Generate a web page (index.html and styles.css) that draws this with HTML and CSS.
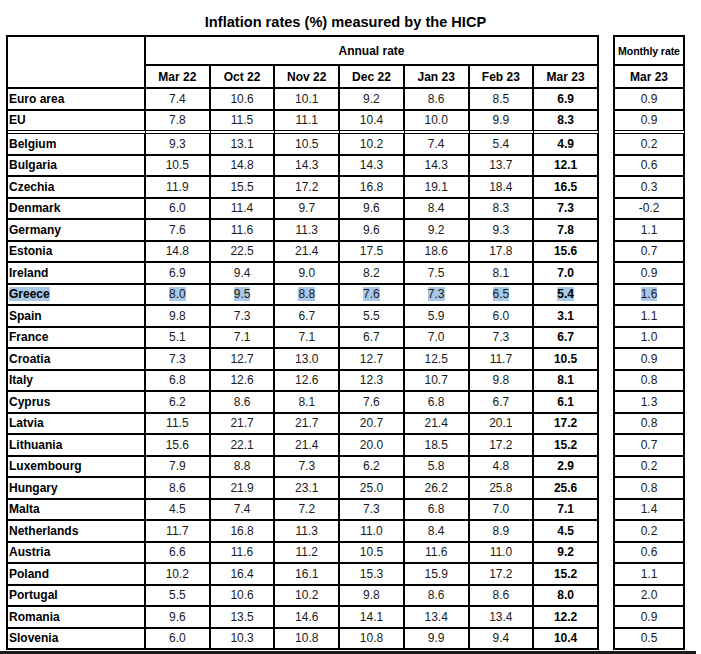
FILE: index.html
```html
<!DOCTYPE html>
<html lang="en">
<head>
<meta charset="utf-8">
<title>Inflation rates (%) measured by the HICP</title>
<link rel="stylesheet" href="styles.css">
</head>
<body>
<div class="page">
  <h1 class="title">Inflation rates (%) measured by the HICP</h1>
  <div class="tables">
    <table class="grid main">
      <colgroup><col class="c-country"><col><col><col><col><col><col><col></colgroup>
      <thead>
        <tr class="h1"><th rowspan="2" class="corner"></th><th colspan="7" class="group">Annual rate</th></tr>
        <tr class="h2"><th>Mar 22</th><th>Oct 22</th><th>Nov 22</th><th>Dec 22</th><th>Jan 23</th><th>Feb 23</th><th>Mar 23</th></tr>
      </thead>
      <tbody>
        <tr><th>Euro area</th><td>7.4</td><td>10.6</td><td>10.1</td><td>9.2</td><td>8.6</td><td>8.5</td><td class="b">6.9</td></tr>
        <tr class="sep"><th>EU</th><td>7.8</td><td>11.5</td><td>11.1</td><td>10.4</td><td>10.0</td><td>9.9</td><td class="b">8.3</td></tr>
        <tr><th>Belgium</th><td>9.3</td><td>13.1</td><td>10.5</td><td>10.2</td><td>7.4</td><td>5.4</td><td class="b">4.9</td></tr>
        <tr><th>Bulgaria</th><td>10.5</td><td>14.8</td><td>14.3</td><td>14.3</td><td>14.3</td><td>13.7</td><td class="b">12.1</td></tr>
        <tr><th>Czechia</th><td>11.9</td><td>15.5</td><td>17.2</td><td>16.8</td><td>19.1</td><td>18.4</td><td class="b">16.5</td></tr>
        <tr><th>Denmark</th><td>6.0</td><td>11.4</td><td>9.7</td><td>9.6</td><td>8.4</td><td>8.3</td><td class="b">7.3</td></tr>
        <tr><th>Germany</th><td>7.6</td><td>11.6</td><td>11.3</td><td>9.6</td><td>9.2</td><td>9.3</td><td class="b">7.8</td></tr>
        <tr><th>Estonia</th><td>14.8</td><td>22.5</td><td>21.4</td><td>17.5</td><td>18.6</td><td>17.8</td><td class="b">15.6</td></tr>
        <tr><th>Ireland</th><td>6.9</td><td>9.4</td><td>9.0</td><td>8.2</td><td>7.5</td><td>8.1</td><td class="b">7.0</td></tr>
        <tr class="sel"><th><span class="hl">Greece</span></th><td><span class="hl">8.0</span></td><td><span class="hl">9.5</span></td><td><span class="hl">8.8</span></td><td><span class="hl">7.6</span></td><td><span class="hl">7.3</span></td><td><span class="hl">6.5</span></td><td class="b"><span class="hl">5.4</span></td></tr>
        <tr><th>Spain</th><td>9.8</td><td>7.3</td><td>6.7</td><td>5.5</td><td>5.9</td><td>6.0</td><td class="b">3.1</td></tr>
        <tr><th>France</th><td>5.1</td><td>7.1</td><td>7.1</td><td>6.7</td><td>7.0</td><td>7.3</td><td class="b">6.7</td></tr>
        <tr><th>Croatia</th><td>7.3</td><td>12.7</td><td>13.0</td><td>12.7</td><td>12.5</td><td>11.7</td><td class="b">10.5</td></tr>
        <tr><th>Italy</th><td>6.8</td><td>12.6</td><td>12.6</td><td>12.3</td><td>10.7</td><td>9.8</td><td class="b">8.1</td></tr>
        <tr><th>Cyprus</th><td>6.2</td><td>8.6</td><td>8.1</td><td>7.6</td><td>6.8</td><td>6.7</td><td class="b">6.1</td></tr>
        <tr><th>Latvia</th><td>11.5</td><td>21.7</td><td>21.7</td><td>20.7</td><td>21.4</td><td>20.1</td><td class="b">17.2</td></tr>
        <tr><th>Lithuania</th><td>15.6</td><td>22.1</td><td>21.4</td><td>20.0</td><td>18.5</td><td>17.2</td><td class="b">15.2</td></tr>
        <tr><th>Luxembourg</th><td>7.9</td><td>8.8</td><td>7.3</td><td>6.2</td><td>5.8</td><td>4.8</td><td class="b">2.9</td></tr>
        <tr><th>Hungary</th><td>8.6</td><td>21.9</td><td>23.1</td><td>25.0</td><td>26.2</td><td>25.8</td><td class="b">25.6</td></tr>
        <tr><th>Malta</th><td>4.5</td><td>7.4</td><td>7.2</td><td>7.3</td><td>6.8</td><td>7.0</td><td class="b">7.1</td></tr>
        <tr><th>Netherlands</th><td>11.7</td><td>16.8</td><td>11.3</td><td>11.0</td><td>8.4</td><td>8.9</td><td class="b">4.5</td></tr>
        <tr><th>Austria</th><td>6.6</td><td>11.6</td><td>11.2</td><td>10.5</td><td>11.6</td><td>11.0</td><td class="b">9.2</td></tr>
        <tr><th>Poland</th><td>10.2</td><td>16.4</td><td>16.1</td><td>15.3</td><td>15.9</td><td>17.2</td><td class="b">15.2</td></tr>
        <tr><th>Portugal</th><td>5.5</td><td>10.6</td><td>10.2</td><td>9.8</td><td>8.6</td><td>8.6</td><td class="b">8.0</td></tr>
        <tr><th>Romania</th><td>9.6</td><td>13.5</td><td>14.6</td><td>14.1</td><td>13.4</td><td>13.4</td><td class="b">12.2</td></tr>
        <tr><th>Slovenia</th><td>6.0</td><td>10.3</td><td>10.8</td><td>10.8</td><td>9.9</td><td>9.4</td><td class="b">10.4</td></tr>
      </tbody>
    </table>

    <table class="grid monthly">
      <thead>
        <tr class="h1"><th class="group small">Monthly rate</th></tr>
        <tr class="h2"><th>Mar 23</th></tr>
      </thead>
      <tbody>
        <tr><td>0.9</td></tr>
        <tr class="sep"><td>0.9</td></tr>
        <tr><td>0.2</td></tr>
        <tr><td>0.6</td></tr>
        <tr><td>0.3</td></tr>
        <tr><td>-0.2</td></tr>
        <tr><td>1.1</td></tr>
        <tr><td>0.7</td></tr>
        <tr><td>0.9</td></tr>
        <tr class="sel"><td><span class="hl">1.6</span></td></tr>
        <tr><td>1.1</td></tr>
        <tr><td>1.0</td></tr>
        <tr><td>0.9</td></tr>
        <tr><td>0.8</td></tr>
        <tr><td>1.3</td></tr>
        <tr><td>0.8</td></tr>
        <tr><td>0.7</td></tr>
        <tr><td>0.2</td></tr>
        <tr><td>0.8</td></tr>
        <tr><td>1.4</td></tr>
        <tr><td>0.2</td></tr>
        <tr><td>0.6</td></tr>
        <tr><td>1.1</td></tr>
        <tr><td>2.0</td></tr>
        <tr><td>0.9</td></tr>
        <tr><td>0.5</td></tr>
      </tbody>
    </table>
  </div>
  <div class="crop-edge"></div>
</div>
</body>
</html>
```

FILE: styles.css
```css
html, body {
  margin: 0;
  padding: 0;
  background: #ffffff;
}

body {
  font-family: "Liberation Sans", Arial, sans-serif;
  color: #111111;
  overflow: hidden;
}

.page {
  padding-left: 6px;
  width: 679px;
}

.title {
  margin: 0 0 4px 0;
  padding-top: 14px;
  font-size: 14.6px;
  line-height: 17px;
  font-weight: bold;
  text-align: center;
  color: #000;
}

.tables {
  display: flex;
  align-items: flex-start;
  gap: 14px;
}

.grid {
  border-collapse: separate;
  border-spacing: 0;
  table-layout: fixed;
  border-top: 2px solid #000;
  border-left: 2px solid #000;
}

.main {
  width: 593px;
}

.monthly {
  width: 72px;
}

.c-country {
  width: 138px;
}

.grid th,
.grid td {
  border-right: 2px solid #000;
  border-bottom: 2px solid #000;
  padding: 0;
  height: 19.5px;
  font-size: 12px;
  line-height: 14px;
  text-align: center;
  vertical-align: middle;
  white-space: nowrap;
}

.grid td {
  font-weight: normal;
  color: #1a1a1a;
}

.grid tbody th {
  text-align: left;
  padding-left: 1px;
  font-weight: bold;
  color: #000;
}

.grid thead th {
  font-weight: bold;
  color: #000;
}

.grid .h1 th {
  height: 27px;
}

.grid .h2 th {
  height: 21px;
}

.grid th.small {
  font-size: 10.6px;
  letter-spacing: -0.1px;
}

.grid td.b {
  font-weight: bold;
  color: #000;
}

.grid tr.sep th,
.grid tr.sep td {
  border-bottom: 4px double #000;
}

.hl {
  background: #a9c9e8;
}

.crop-edge {
  margin: 1px 0 0 -6px;
  width: 696px;
  height: 4px;
  background: #1b1b1b;
}
```
